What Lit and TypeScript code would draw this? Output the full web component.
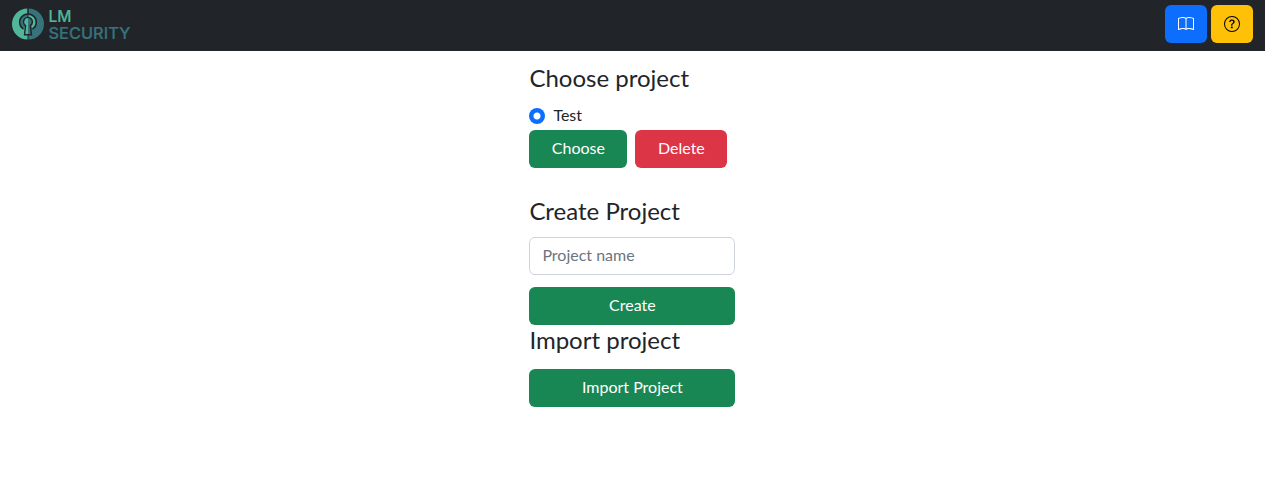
import { LitElement, html, css, svg } from "lit";
import { customElement } from "lit/decorators.js";

const book = svg`<path d="M1 2.828c.885-.37 2.154-.769 3.388-.893 1.33-.134 2.458.063 3.112.752v9.746c-.935-.53-2.12-.603-3.213-.493-1.18.12-2.37.461-3.287.811zm7.5-.141c.654-.689 1.782-.886 3.112-.752 1.234.124 2.503.523 3.388.893v9.923c-.918-.35-2.107-.692-3.287-.81-1.094-.111-2.278-.039-3.213.492zM8 1.783C7.015.936 5.587.81 4.287.94c-1.514.153-3.042.672-3.994 1.105A.5.5 0 0 0 0 2.5v11a.5.5 0 0 0 .707.455c.882-.4 2.303-.881 3.68-1.02 1.409-.142 2.59.087 3.223.877a.5.5 0 0 0 .78 0c.633-.79 1.814-1.019 3.222-.877 1.378.139 2.8.62 3.681 1.02A.5.5 0 0 0 16 13.5v-11a.5.5 0 0 0-.293-.455c-.952-.433-2.48-.952-3.994-1.105C10.413.809 8.985.936 8 1.783"/>`;
const question = svg`<path d="M8 15A7 7 0 1 1 8 1a7 7 0 0 1 0 14m0 1A8 8 0 1 0 8 0a8 8 0 0 0 0 16"/><path d="M5.255 5.786a.237.237 0 0 0 .241.247h.825c.138 0 .248-.113.266-.25.09-.656.54-1.134 1.342-1.134.686 0 1.314.343 1.314 1.168 0 .635-.374.927-.965 1.371-.673.489-1.206 1.06-1.168 1.987l.003.217a.25.25 0 0 0 .25.246h.811a.25.25 0 0 0 .25-.25v-.105c0-.718.273-.927 1.01-1.486.609-.463 1.244-.977 1.244-2.056 0-1.511-1.276-2.241-2.673-2.241-1.267 0-2.655.59-2.75 2.286m1.557 5.763c0 .533.425.927 1.01.927.609 0 1.028-.394 1.028-.927 0-.552-.42-.94-1.029-.94-.584 0-1.009.388-1.009.94"/>`;

@customElement("app-root")
export class AppRoot extends LitElement {
  static styles = css`
    :host {
      display: block;
      min-height: 100vh;
      background: #fff;
      color: #212529;
      font: 400 16px/24px Lato, sans-serif;
    }
    * { box-sizing: border-box; }
    .bar {
      display: flex;
      align-items: flex-start;
      justify-content: space-between;
      height: 51px;
      padding: 5px 12px 0;
      background: #212529;
    }
    .logo { display: block; }
    .tools { display: flex; gap: 4px; }
    .btn {
      display: block;
      height: 38px;
      padding: 5px 12px 7px;
      border: 1px solid transparent;
      border-radius: 6px;
      font: inherit;
      color: #fff;
      text-align: center;
    }
    .icon { padding: 10px 12px; }
    .icon svg { display: block; }
    .blue { background: #0d6efd; }
    .yellow { background: #ffc107; color: #000; }
    .green { background: #198754; }
    .red { background: #dc3545; }
    .column { width: 206px; margin: 0 0 0 529.4px; padding-top: 12px; }
    h4 { margin: 0 0 8px; font-size: 24px; font-weight: 400; line-height: 29px; white-space: nowrap; }
    .check { display: flex; align-items: flex-start; gap: 8px; height: 24px; line-height: 23px; margin: 11px 0 3px; }
    .radio {
      appearance: none;
      width: 16px;
      height: 16px;
      margin: 5px 0 0;
      border-radius: 50%;
      background: radial-gradient(circle, #fff 3px, #0d6efd 4px);
    }
    .row { display: flex; gap: 8px; margin-bottom: 28px; }
    .choose { width: 98px; }
    .delete { width: 92px; }
    .field {
      display: block;
      width: 100%;
      height: 38px;
      padding: 4px 12px 8px;
      border: 1px solid #ced4da;
      border-radius: 6px;
      font: inherit;
      margin: 12px 0 12px;
    }
    .field::placeholder { color: #6c757d; opacity: 1; }
    .wide { width: 100%; }
    .import { margin: 0 0 15px; }
  `;

  render() {
    return html`
      <nav class="bar">
        <svg class="logo" width="120" height="38" viewBox="12 5 120 38" role="img" aria-label="LM Security">
          <path d="M27.5 8.5a15.5 15.5 0 0 0 0 31z" fill="#51b79b" />
          <path d="M28.5 8.5a15.5 15.5 0 0 1 0 31z" fill="#36737b" />
          <path d="M28 14.5a7.8 7.8 0 0 0-5 13.8l2-1.5L28 25z" fill="#36737b" />
          <path d="M28 14.5a7.8 7.8 0 0 1 5 13.8l-2-1.5L28 25z" fill="#51b79b" />
          <path d="M23.5 29.2A8.3 8.3 0 1 1 32.5 29.2" fill="none" stroke="#212529" stroke-width="1.5" />
          <path d="M28 8V18" stroke="#212529" />
          <path d="M25.6 25.5A4.4 4.4 0 1 1 30.4 25.5L31.4 34.7H24.6z" fill="#36737b" stroke="#212529" stroke-width="1.5" />
          <path d="M28 18A3.8 3.8 0 0 0 26.3 25.1L25.5 34H28z" fill="#51b79b" />
          <g font-family="Inter, sans-serif" font-weight="500">
            <text x="48.5" y="21.5" font-size="16.3" textLength="23" lengthAdjust="spacingAndGlyphs" fill="#51b79b" stroke="#51b79b" stroke-width=".2">LM</text>
            <text x="48.5" y="39.1" font-size="16.3" textLength="82" lengthAdjust="spacingAndGlyphs" fill="#36737b" stroke="#36737b" stroke-width=".2">SECURITY</text>
          </g>
        </svg>
        <div class="tools">
          <button class="btn icon blue" aria-label="Documentation"><svg width="16" height="16" viewBox="0 0 16 16" fill="currentColor">${book}</svg></button>
          <button class="btn icon yellow" aria-label="Help"><svg width="16" height="16" viewBox="0 0 16 16" fill="currentColor">${question}</svg></button>
        </div>
      </nav>
      <main class="column">
        <h4>Choose project</h4>
        <label class="check"><input class="radio" type="radio" name="project" checked />Test</label>
        <div class="row">
          <button class="btn green choose">Choose</button>
          <button class="btn red delete">Delete</button>
        </div>
        <h4>Create Project</h4>
        <input class="field" type="text" placeholder="Project name" />
        <button class="btn green wide">Create</button>
        <h4 class="import">Import project</h4>
        <button class="btn green wide">Import Project</button>
      </main>
    `;
  }
}
